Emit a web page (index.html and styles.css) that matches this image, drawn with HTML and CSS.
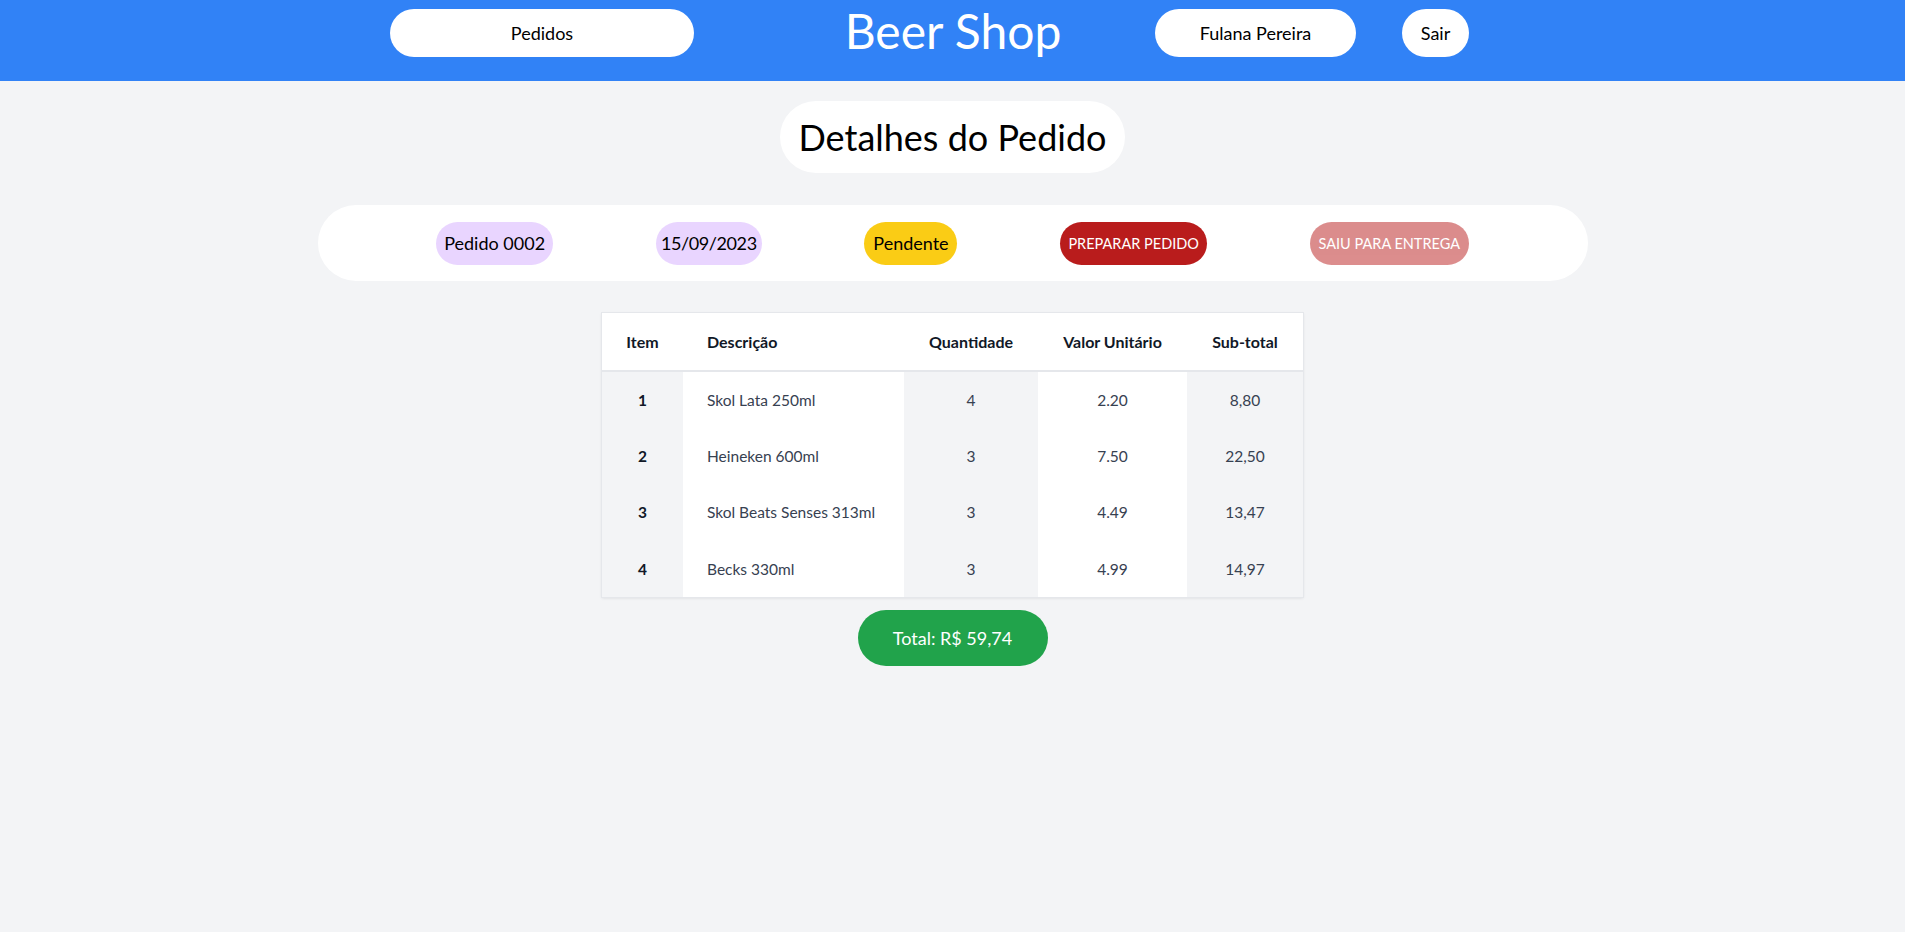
FILE: index.html
```html
<!DOCTYPE html>
<html lang="pt-BR">
<head>
<meta charset="utf-8">
<title>Beer Shop - Detalhes do Pedido</title>
<link rel="stylesheet" href="styles.css">
</head>
<body>
<header class="topbar">
  <a class="nav-btn nav-orders" href="#">Pedidos</a>
  <h1 class="brand">Beer Shop</h1>
  <span class="nav-btn nav-user">Fulana Pereira</span>
  <a class="nav-btn nav-exit" href="#">Sair</a>
</header>
<main class="page">
  <h2 class="title-pill">Detalhes do Pedido</h2>
  <section class="status-bar">
    <span class="badge badge-purple b-order">Pedido 0002</span>
    <span class="badge badge-purple b-date">15/09/2023</span>
    <span class="badge badge-yellow b-status">Pendente</span>
    <button class="badge action action-prepare">PREPARAR PEDIDO</button>
    <button class="badge action action-out">SAIU PARA ENTREGA</button>
  </section>
  <table class="items">
    <thead>
      <tr>
        <th class="c-item">Item</th>
        <th class="c-desc">Descrição</th>
        <th class="c-qty">Quantidade</th>
        <th class="c-unit">Valor Unitário</th>
        <th class="c-sub">Sub-total</th>
      </tr>
    </thead>
    <tbody>
      <tr><td class="c-item">1</td><td class="c-desc">Skol Lata 250ml</td><td class="c-qty">4</td><td class="c-unit">2.20</td><td class="c-sub">8,80</td></tr>
      <tr><td class="c-item">2</td><td class="c-desc">Heineken 600ml</td><td class="c-qty">3</td><td class="c-unit">7.50</td><td class="c-sub">22,50</td></tr>
      <tr><td class="c-item">3</td><td class="c-desc">Skol Beats Senses 313ml</td><td class="c-qty">3</td><td class="c-unit">4.49</td><td class="c-sub">13,47</td></tr>
      <tr><td class="c-item">4</td><td class="c-desc">Becks 330ml</td><td class="c-qty">3</td><td class="c-unit">4.99</td><td class="c-sub">14,97</td></tr>
    </tbody>
  </table>
  <div class="total">Total: R$ 59,74</div>
</main>
</body>
</html>
```
FILE: styles.css
```css
* { box-sizing: border-box; }

html, body {
  margin: 0;
  padding: 0;
  background: #f3f4f6;
  font-family: "Lato", "Open Sans", "Liberation Sans", sans-serif;
  color: #111827;
}

.topbar {
  height: 81px;
  background: #3182f6;
  display: flex;
  align-items: center;
  padding: 9px 0 24px 390px;
}

.nav-btn {
  display: flex;
  align-items: center;
  justify-content: center;
  height: 48px;
  background: #ffffff;
  border-radius: 9999px;
  color: #000000;
  text-decoration: none;
  font-size: 18px;
}

.nav-orders { width: 304px; }
.nav-user { width: 201px; margin-left: 93px; }
.nav-exit { width: 67px; margin-left: 46px; }

.brand {
  margin: -4px 0 0 150px;
  width: 218px;
  text-align: center;
  font-size: 48px;
  font-weight: 400;
  line-height: 48px;
  color: #ffffff;
  white-space: nowrap;
}

.page {
  display: flex;
  flex-direction: column;
  align-items: center;
  padding-top: 20px;
}

.title-pill {
  margin: 0;
  padding: 16px 18px;
  background: #ffffff;
  border-radius: 9999px;
  font-size: 36px;
  line-height: 40px;
  font-weight: 400;
  color: #000000;
}

.status-bar {
  margin-top: 32px;
  width: 1270px;
  height: 76px;
  background: #ffffff;
  border-radius: 9999px;
  display: flex;
  align-items: center;
  justify-content: space-evenly;
  padding: 0 16px;
}

.badge {
  display: inline-block;
  padding: 8px 0;
  border-radius: 9999px;
  font-size: 18px;
  line-height: 27px;
  border: none;
  font-family: inherit;
  color: #000000;
  text-align: center;
  white-space: nowrap;
}

.b-order { width: 117px; }
.b-date { width: 106px; letter-spacing: -0.4px; }
.b-status { width: 93px; }

.badge-purple { background: #e9d5ff; }
.badge-yellow { background: #facc15; }

.action {
  font-size: 14.5px;
  color: #ffffff;
  cursor: pointer;
}

.action-prepare { background: #b91c1c; width: 147px; }
.action-out { background: #b91c1c; opacity: 0.5; width: 159px; }

.items {
  margin-top: 32px;
  width: 701px;
  table-layout: fixed;
  border-collapse: collapse;
  background: #ffffff;
  box-shadow: 0 0 0 1px #e5e7eb, 0 1px 3px rgba(0, 0, 0, 0.12);
}

.items th {
  height: 58px;
  padding: 0 24px;
  font-size: 16px;
  font-weight: 700;
  color: #111827;
  border-bottom: 2px solid #e5e7eb;
  text-align: center;
  background: #ffffff;
  white-space: nowrap;
}

.items td {
  height: 56.5px;
  padding: 0 24px;
  font-size: 15.5px;
  font-weight: 400;
  color: #374151;
  text-align: center;
  white-space: nowrap;
}

.items .c-item { width: 81px; }
.items .c-desc { width: 221px; text-align: left; }
.items .c-qty { width: 134px; }
.items .c-unit { width: 149px; }
.items .c-sub { width: 116px; }

.items td.c-item { background: #f3f4f6; font-weight: 700; color: #111827; }
.items td.c-qty { background: #f3f4f6; }
.items td.c-sub { background: #f3f4f6; }
.items td.c-desc, .items td.c-unit { background: #ffffff; }

.total {
  margin-top: 13px;
  width: 190px;
  height: 56px;
  display: flex;
  align-items: center;
  justify-content: center;
  background: #21a34b;
  color: #ffffff;
  border-radius: 9999px;
  font-size: 18px;
}
```
